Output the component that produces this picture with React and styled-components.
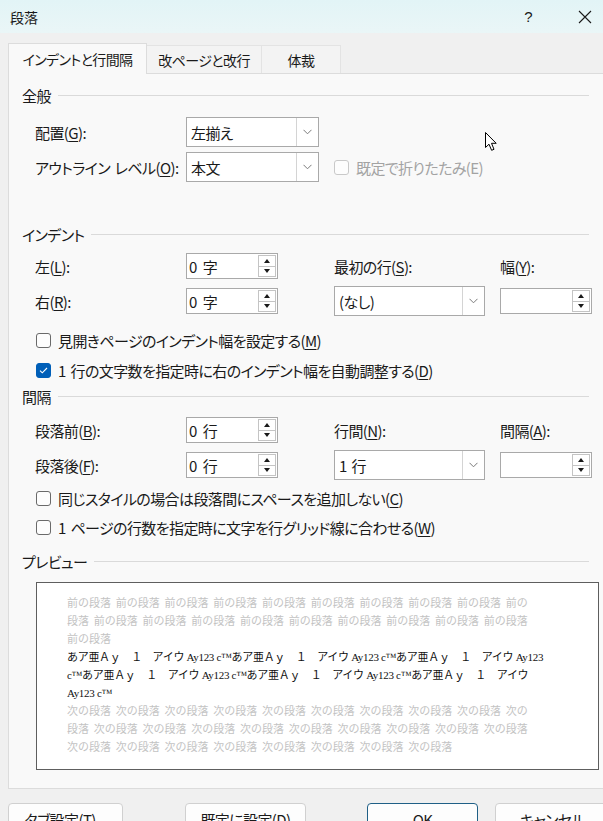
import React from "react";
import styled, { createGlobalStyle } from "styled-components";

const GlobalStyle = createGlobalStyle`
  html, body { margin: 0; padding: 0; background: #f0f0f0; }
  body { font-family: "Noto Sans CJK JP", "Noto Sans", sans-serif; }
`;

const Window = styled.div`
  position: relative;
  width: 603px;
  height: 821px;
  overflow: hidden;
  background: #f0f0f0;
  color: #1a1a1a;
  font-size: 15px;
  letter-spacing: -0.6px;
  word-spacing: 2px;
  font-feature-settings: "palt";
`;

const TitleBar = styled.div`
  height: 33px;
  display: flex;
  align-items: center;
  padding-left: 10px;
  background: linear-gradient(#e2f4f6, #eaf6f7);
`;

const Title = styled.div`
  flex: 1;
  font-size: 14px;
  letter-spacing: 0;
`;

const TitleButton = styled.div`
  width: ${(p) => p.$w}px;
  margin-right: ${(p) => p.$mr || 0}px;
  height: 33px;
  display: flex;
  align-items: center;
  justify-content: center;
  font-size: 15px;
  font-family: "Liberation Sans", sans-serif;
`;

const Body = styled.div`
  padding: 9px 0 0 8px;
`;

const TabStrip = styled.div`
  display: flex;
  align-items: flex-end;
  height: 31px;
`;

const Tab = styled.div`
  height: ${(p) => (p.$active ? 31 : 28)}px;
  width: ${(p) => p.$w}px;
  box-sizing: border-box;
  display: flex;
  align-items: center;
  justify-content: center;
  font-size: 14px;
  background: ${(p) => (p.$active ? "#f9f9f9" : "#f3f3f3")};
  border: 1px solid ${(p) => (p.$active ? "#dcdcdc" : "#e3e3e3")};
  border-bottom: none;
  border-left: ${(p) => (p.$first ? "1px solid #dcdcdc" : "none")};
  position: relative;
  z-index: ${(p) => (p.$active ? 2 : 1)};
  margin-bottom: ${(p) => (p.$active ? "-1px" : "0")};
  padding-bottom: ${(p) => (p.$active ? "1px" : "0")};
`;

const Panel = styled.div`
  margin-right: -10px;
  background: #f9f9f9;
  border: 1px solid #dcdcdc;
  padding: 11px 0 18px 0;
`;

const Heading = styled.div`
  display: flex;
  align-items: center;
  height: 20px;
  margin-top: ${(p) => p.$mt || 0}px;
  padding-left: 13px;
  padding-right: 23px;
  &::after {
    content: "";
    flex: 1;
    height: 1px;
    background: #dadada;
    margin-left: 7px;
  }
`;

const Row = styled.div`
  display: grid;
  grid-template-columns: 151px 148px 166px 92px;
  align-items: center;
  height: 30px;
  margin-top: ${(p) => p.$mt || 0}px;
  padding-left: 26px;
`;

const U = styled.span`
  text-decoration: underline;
  text-underline-offset: 2px;
`;

const SelectBox = styled.div`
  width: ${(p) => p.$w}px;
  height: 30px;
  box-sizing: border-box;
  border: 1px solid #a9a9a9;
  background: #fff;
  display: flex;
`;

const SelectValue = styled.div`
  flex: 1;
  display: flex;
  align-items: center;
  padding-left: 4px;
`;

const SelectArrow = styled.div`
  width: 21px;
  border-left: 1px solid #d4d4d4;
  display: flex;
  align-items: center;
  justify-content: center;
`;

const SpinBox = styled.div`
  width: 92px;
  height: 26px;
  box-sizing: border-box;
  border: 1px solid #a9a9a9;
  background: #fff;
  display: flex;
  align-items: stretch;
`;

const SpinValue = styled.div`
  flex: 1;
  display: flex;
  align-items: center;
  padding-left: 2px;
  letter-spacing: 0;
`;

const SpinButtons = styled.div`
  width: 18px;
  margin: 1px 1px 1px 0;
  display: flex;
  flex-direction: column;
`;

const SpinButton = styled.div`
  flex: 1;
  border: 1px solid #c4c4c4;
  border-top: ${(p) => (p.$down ? "none" : "1px solid #c4c4c4")};
  display: flex;
  align-items: center;
  justify-content: center;
  background: #fff;
`;

const Triangle = styled.div`
  width: 0;
  height: 0;
  border-left: 3.5px solid transparent;
  border-right: 3.5px solid transparent;
  ${(p) =>
    p.$down ? "border-top: 4px solid #1a1a1a;" : "border-bottom: 4px solid #1a1a1a;"}
`;

const CheckRow = styled.label`
  display: flex;
  align-items: center;
  height: 24px;
  margin-top: ${(p) => p.$mt || 0}px;
  padding-left: ${(p) => (p.$inline ? 0 : 27)}px;
  color: ${(p) => (p.$disabled ? "#a3a3a3" : "inherit")};
  white-space: pre;
`;

const Box = styled.span`
  width: 15px;
  height: 15px;
  box-sizing: border-box;
  border-radius: 3px;
  margin-right: 7px;
  display: flex;
  align-items: center;
  justify-content: center;
  border: 1px solid ${(p) => (p.$checked ? "#005fb8" : p.$disabled ? "#c9c9c9" : "#6a6a6a")};
  background: ${(p) => (p.$checked ? "#005fb8" : "#fdfdfd")};
`;

const Preview = styled.div`
  margin: 11px 13px 0 27px;
  height: 188px;
  box-sizing: border-box;
  border: 1px solid #5e5e5e;
  background: #fff;
  padding: 11px 0 0 30px;
  font-family: "Liberation Serif", "Noto Sans CJK JP", serif;
  font-feature-settings: normal;
  letter-spacing: 0;
  word-spacing: 0;
  font-size: 11px;
  line-height: 18px;
`;

const PreviewLine = styled.div`
  white-space: pre;
  color: ${(p) => (p.$ghost ? "#c3c3c3" : "#111")};
  word-spacing: ${(p) => (p.$ghost ? "2px" : "0")};
  letter-spacing: ${(p) => (p.$ghost ? "0" : "-0.3px")};
`;

const ButtonRow = styled.div`
  display: flex;
  margin-top: 14px;
`;

const Button = styled.div`
  width: ${(p) => p.$w}px;
  margin-left: ${(p) => p.$ml}px;
  height: 34px;
  flex-shrink: 0;
  box-sizing: border-box;
  border-radius: 4px;
  border: 1px solid ${(p) => (p.$primary ? "#1f5f86" : "#d0d0d0")};
  background: #fdfdfd;
  display: flex;
  justify-content: center;
  padding-top: 5px;
`;

const Cursor = styled.svg`
  position: absolute;
  left: 485px;
  top: 132px;
`;

function Chevron() {
  return (
    <svg width="9" height="6" viewBox="0 0 9 6">
      <path d="M0.5 0.8 L4.5 4.8 L8.5 0.8" fill="none" stroke="#7a7a7a" strokeWidth="1" />
    </svg>
  );
}

function Select({ w, value }) {
  return (
    <SelectBox $w={w}>
      <SelectValue>{value}</SelectValue>
      <SelectArrow>
        <Chevron />
      </SelectArrow>
    </SelectBox>
  );
}

function Spin({ value }) {
  return (
    <SpinBox>
      <SpinValue>{value}</SpinValue>
      <SpinButtons>
        <SpinButton>
          <Triangle />
        </SpinButton>
        <SpinButton $down>
          <Triangle $down />
        </SpinButton>
      </SpinButtons>
    </SpinBox>
  );
}

function Check({ checked, disabled, inline, mt, children }) {
  return (
    <CheckRow $mt={mt} $inline={inline} $disabled={disabled}>
      <Box $checked={checked} $disabled={disabled}>
        {checked && (
          <svg width="9" height="7" viewBox="0 0 9 7">
            <path d="M1 3.6 L3.3 5.8 L8 1" fill="none" stroke="#fff" strokeWidth="1.1" />
          </svg>
        )}
      </Box>
      {children}
    </CheckRow>
  );
}

const mae = "前の段落";
const tsugi = "次の段落";
const rep = (s, n) => Array(n).fill(s).join(" ");
const sample = "あア亜Ａｙ　１　アイウ Ay123 c™";

const previewLines = [
  { t: rep(mae, 9) + " 前の", ghost: true },
  { t: "段落 " + rep(mae, 9), ghost: true },
  { t: mae, ghost: true },
  { t: sample + sample + "あア亜Ａｙ　１　アイウ Ay123" },
  { t: "c™" + sample + sample + "あア亜Ａｙ　１　アイウ" },
  { t: "Ay123 c™" },
  { t: rep(tsugi, 9) + " 次の", ghost: true },
  { t: "段落 " + rep(tsugi, 9), ghost: true },
  { t: rep(tsugi, 8), ghost: true },
];

export default function App() {
  return (
    <Window>
      <GlobalStyle />
      <TitleBar>
        <Title>段落</Title>
        <TitleButton $w={56} $mr={11}>?</TitleButton>
        <TitleButton $w={36}>
          <svg width="14" height="14" viewBox="0 0 14 14">
            <path d="M1 1 L13 13 M13 1 L1 13" stroke="#1a1a1a" strokeWidth="1.1" />
          </svg>
        </TitleButton>
      </TitleBar>
      <Body>
        <TabStrip>
          <Tab $active $first $w={139}>インデントと行間隔</Tab>
          <Tab $w={115}>改ページと改行</Tab>
          <Tab $w={79}>体裁</Tab>
        </TabStrip>
        <Panel>
          <Heading>全般</Heading>
          <Row $mt={12}>
            <span>
              配置(<U>G</U>):
            </span>
            <Select w={133} value="左揃え" />
          </Row>
          <Row $mt={5}>
            <span>
              アウトライン レベル(<U>O</U>):
            </span>
            <Select w={133} value="本文" />
            <Check disabled inline>
              既定で折りたたみ(E)
            </Check>
          </Row>

          <Heading $mt={42}>インデント</Heading>
          <Row $mt={7}>
            <span>
              左(<U>L</U>):
            </span>
            <Spin value="0 字" />
            <span>
              最初の行(<U>S</U>):
            </span>
            <span>
              幅(<U>Y</U>):
            </span>
          </Row>
          <Row $mt={5}>
            <span>
              右(<U>R</U>):
            </span>
            <Spin value="0 字" />
            <Select w={151} value="(なし)" />
            <Spin value="" />
          </Row>
          <Check mt={12}>
            見開きページのインデント幅を設定する(<U>M</U>)
          </Check>
          <Check mt={6} checked>
            1 行の文字数を指定時に右のインデント幅を自動調整する(<U>D</U>)
          </Check>

          <Heading $mt={4}>間隔</Heading>
          <Row $mt={9}>
            <span>
              段落前(<U>B</U>):
            </span>
            <Spin value="0 行" />
            <span>
              行間(<U>N</U>):
            </span>
            <span>
              間隔(<U>A</U>):
            </span>
          </Row>
          <Row $mt={5}>
            <span>
              段落後(<U>F</U>):
            </span>
            <Spin value="0 行" />
            <Select w={151} value="1 行" />
            <Spin value="" />
          </Row>
          <Check mt={6}>
            同じスタイルの場合は段落間にスペースを追加しない(<U>C</U>)
          </Check>
          <Check mt={5}>
            1 ページの行数を指定時に文字を行グリッド線に合わせる(<U>W</U>)
          </Check>

          <Heading $mt={12}>プレビュー</Heading>
          <Preview>
            {previewLines.map((l, i) => (
              <PreviewLine key={i} $ghost={l.ghost}>
                {l.t}
              </PreviewLine>
            ))}
          </Preview>
        </Panel>
        <ButtonRow>
          <Button $w={115} $ml={0}>
            タブ設定(<U>T</U>)...
          </Button>
          <Button $w={121} $ml={62}>
            既定に設定(<U>D</U>)
          </Button>
          <Button $w={111} $ml={61} $primary>
            OK
          </Button>
          <Button $w={115} $ml={17}>
            キャンセル
          </Button>
        </ButtonRow>
      </Body>
      <Cursor width="13" height="20" viewBox="0 0 13 20">
        <path
          d="M0.5 0.5 L0.5 15.5 L4 12.2 L6.6 18.3 L9 17.3 L6.5 11.3 L11.2 11.3 Z"
          fill="#fff"
          stroke="#000"
          strokeWidth="1"
          strokeLinejoin="miter"
        />
      </Cursor>
    </Window>
  );
}
